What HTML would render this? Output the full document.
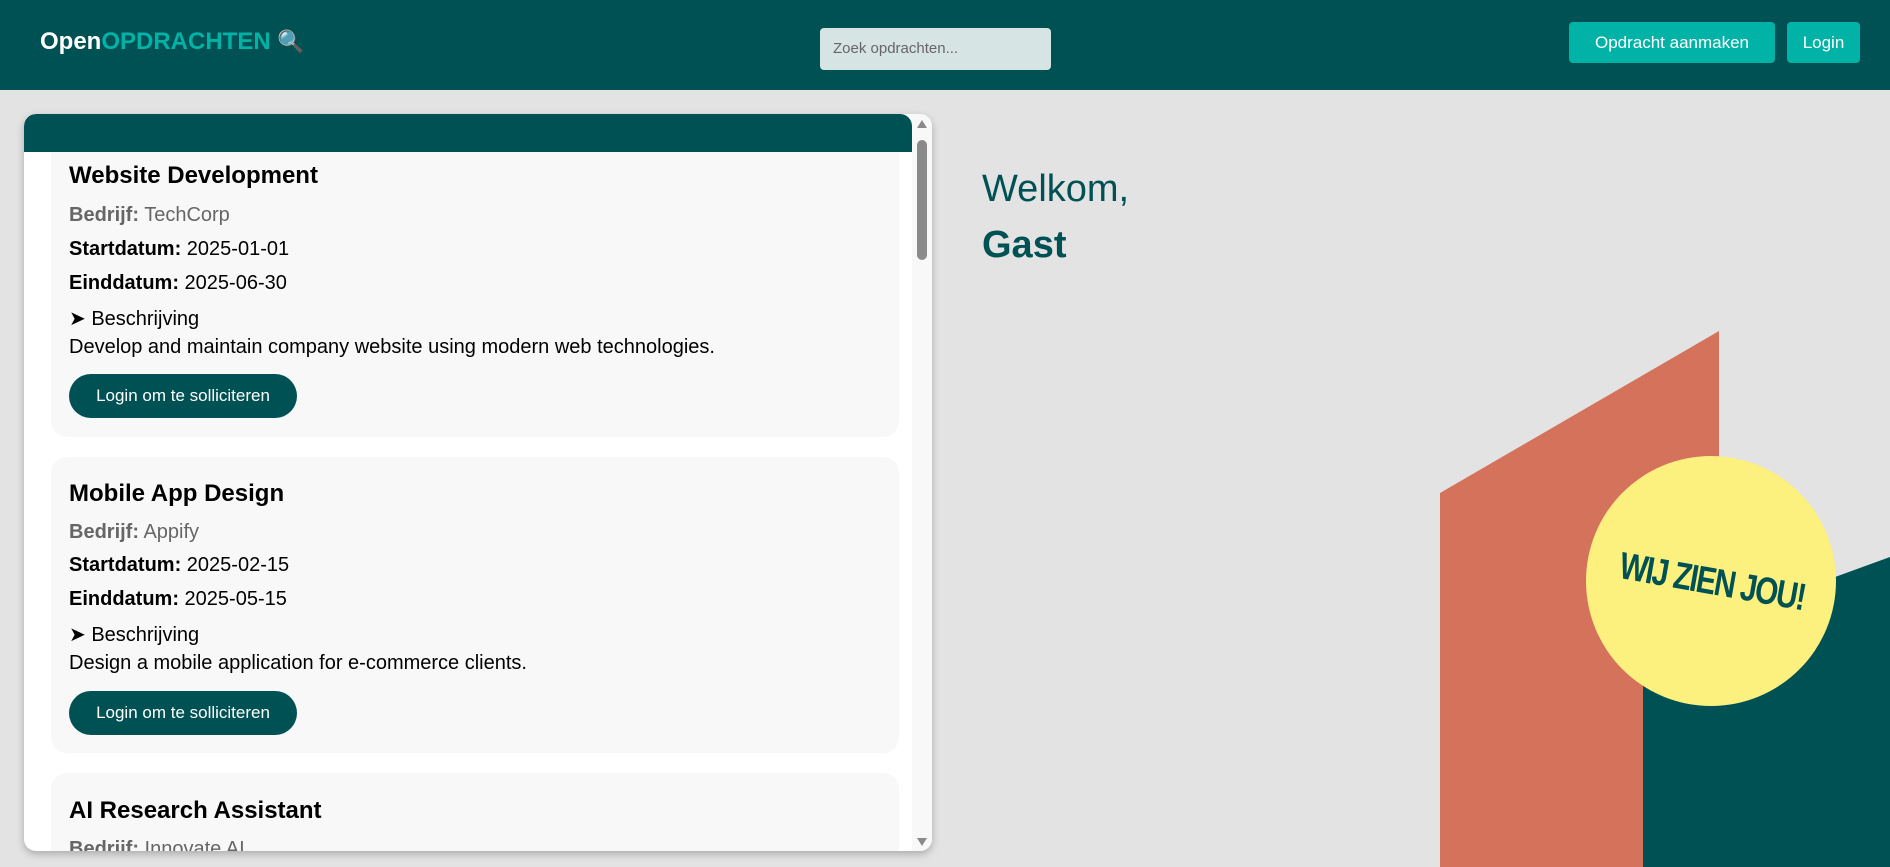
<!DOCTYPE html>
<html><head><meta charset="utf-8"><style>
*{margin:0;padding:0;box-sizing:border-box}
html,body{width:1890px;height:867px;overflow:hidden}
body{background:#e3e3e3;font-family:"Liberation Sans",sans-serif;position:relative}
.a{position:absolute;white-space:nowrap}
.hdr{position:absolute;left:0;top:0;width:1890px;height:90px;background:#005154}
.btn{position:absolute;background:#00b3a6;color:#fff;border-radius:4px;font-size:17px;display:flex;align-items:center;justify-content:center}
.panel{position:absolute;left:24px;top:114px;width:908px;height:737px;background:#fff;border-radius:12px;overflow:hidden;box-shadow:0 3px 8px rgba(0,0,0,.25)}
.card{position:absolute;left:27px;width:848px;background:#f8f8f8;border-radius:16px}
.t{position:absolute;left:45px;font-size:24px;font-weight:bold;color:#000;white-space:nowrap}
.l{position:absolute;left:45px;font-size:20px;color:#000;white-space:nowrap}
.sb{position:absolute;left:45px;width:228px;height:44px;background:#005154;color:#fff;border-radius:22px;font-size:17px;display:flex;align-items:center;justify-content:center}
</style></head><body>
<div class="hdr"></div>
<div class="a" style="left:40px;top:28px;font-size:24px;font-weight:bold;color:#fff">Open<span style="color:#00b3a6">OPDRACHTEN</span> <span style="font-size:22px">&#128269;</span></div>
<div class="a" style="left:820px;top:28px;width:231px;height:42px;background:#d6e4e4;border-radius:4px;font-size:15px;color:#666;padding:12px 0 0 13px">Zoek opdrachten...</div>
<div class="btn" style="left:1569px;top:22px;width:206px;height:41px">Opdracht aanmaken</div>
<div class="btn" style="left:1787px;top:22px;width:73px;height:41px">Login</div>

<div class="panel">
  <div class="card" style="top:-40px;height:363px"></div>
  <div class="card" style="top:343px;height:296px"></div>
  <div class="card" style="top:659px;height:200px"></div>
  <div style="position:absolute;left:0;top:0;width:888px;height:38px;background:#005154;border-radius:12px 12px 0 0"></div>
  <div style="position:absolute;left:888px;top:0;width:20px;height:737px;background:#f8f8f8"></div>
  <div style="position:absolute;left:893px;top:26px;width:10px;height:120px;background:#8a8a8a;border-radius:5px"></div>
  <div style="position:absolute;left:893px;top:6px;width:0;height:0;border-left:5px solid transparent;border-right:5px solid transparent;border-bottom:8px solid #8a8a8a"></div>
  <div style="position:absolute;left:893px;top:724px;width:0;height:0;border-left:5px solid transparent;border-right:5px solid transparent;border-top:8px solid #8a8a8a"></div>

  <div style="position:absolute;left:0;top:38px">
    <div class="t" style="top:10px">Website Development</div>
    <div class="l" style="top:52px;color:#666"><b>Bedrijf:</b> TechCorp</div>
    <div class="l" style="top:86px"><b>Startdatum:</b> 2025-01-01</div>
    <div class="l" style="top:120px"><b>Einddatum:</b> 2025-06-30</div>
    <div class="l" style="top:154px">&#10148; Beschrijving</div>
    <div class="l" style="top:184px">Develop and maintain company website using modern web technologies.</div>
    <div class="sb" style="top:222px">Login om te solliciteren</div>

    <div class="t" style="top:328px">Mobile App Design</div>
    <div class="l" style="top:369px;color:#666"><b>Bedrijf:</b> Appify</div>
    <div class="l" style="top:402px"><b>Startdatum:</b> 2025-02-15</div>
    <div class="l" style="top:436px"><b>Einddatum:</b> 2025-05-15</div>
    <div class="l" style="top:470px">&#10148; Beschrijving</div>
    <div class="l" style="top:500px">Design a mobile application for e-commerce clients.</div>
    <div class="sb" style="top:539px">Login om te solliciteren</div>

    <div class="t" style="top:645px">AI Research Assistant</div>
    <div class="l" style="top:686px;color:#666"><b>Bedrijf:</b> Innovate AI</div>
  </div>
</div>

<div class="a" style="left:982px;top:168px;font-size:38px;color:#005154">Welkom,</div>
<div class="a" style="left:982px;top:224px;font-size:38px;font-weight:bold;color:#005154">Gast</div>

<svg class="a" style="left:0;top:0" width="1890" height="867">
  <polygon points="1440,493 1719,331 1719,867 1440,867" fill="#d5725c"/>
  <polygon points="1643,647 1890,557 1890,867 1643,867" fill="#005154"/>
  <circle cx="1711" cy="581" r="125" fill="#fcf07e"/>
  <text x="0" y="0" transform="translate(1710,594) rotate(10) scale(0.78,1)" text-anchor="middle" font-family="Liberation Sans" font-weight="bold" font-size="38" fill="#005154" letter-spacing="-2">WIJ ZIEN JOU!</text>
</svg>
</body></html>
